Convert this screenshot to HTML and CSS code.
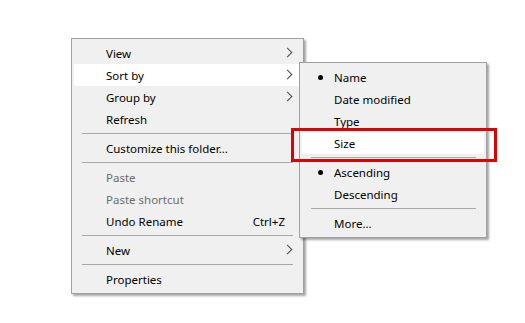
FILE: index.html
```html
<!DOCTYPE html>
<html lang="en">
<head>
    <meta charset="UTF-8">
    <meta name="viewport" content="width=device-width, initial-scale=1.0">
    <title>Context Menu</title>
    <link rel="stylesheet" href="styles.css">
</head>
<body>

    <div class="desktop">
        <ul class="menu main-menu">
            <li class="menu-item has-sub">View</li>
            <li class="menu-item has-sub hover">Sort by</li>
            <li class="menu-item has-sub">Group by</li>
            <li class="menu-item">Refresh</li>
            <li class="menu-sep"></li>
            <li class="menu-item">Customize this folder...</li>
            <li class="menu-sep"></li>
            <li class="menu-item disabled">Paste</li>
            <li class="menu-item disabled">Paste shortcut</li>
            <li class="menu-item">Undo Rename<span class="shortcut">Ctrl+Z</span></li>
            <li class="menu-sep"></li>
            <li class="menu-item has-sub">New</li>
            <li class="menu-sep"></li>
            <li class="menu-item">Properties</li>
        </ul>

        <ul class="menu sub-menu">
            <li class="menu-item checked">Name</li>
            <li class="menu-item">Date modified</li>
            <li class="menu-item">Type</li>
            <li class="menu-item hover">Size</li>
            <li class="menu-sep"></li>
            <li class="menu-item checked">Ascending</li>
            <li class="menu-item">Descending</li>
            <li class="menu-sep"></li>
            <li class="menu-item">More...</li>
        </ul>

        <div class="mark-box"></div>
    </div>

</body>
</html>
```

FILE: styles.css
```css
:root {
    --menu-bg: #F0F0F0;
    --menu-border: #A0A0A0;
    --sep-color: #A8A8A8;
    --text-dark: #000000;
    --text-disabled: #6D6D6D;
    --mark-red: #E00000;
    --font-family: "Noto Sans", "Segoe UI", sans-serif;
}
*, *::before, *::after { box-sizing: border-box; }
body { margin: 0; background: #FFFFFF; font-family: var(--font-family); font-size: 11.5px; color: var(--text-dark); }
.desktop { position: relative; width: 525px; height: 323px; padding: 38px 0 0 71px; }

.menu { list-style: none; margin: 0; background-color: var(--menu-bg); border: 1px solid var(--menu-border); box-shadow: 2px 2px 2px rgba(0, 0, 0, 0.35); }
.main-menu { width: 233px; padding: 3px 2px; }
.sub-menu { position: absolute; left: 299px; top: 62px; width: 188px; padding: 3px 2px; }

.menu-item { position: relative; height: 22px; line-height: 24px; padding-left: 32px; padding-right: 18px; white-space: nowrap; }
.menu-item.hover { background-color: #FFFFFF; }
.main-menu .menu-item.hover { margin-right: -3px; }
.menu-item.disabled { color: var(--text-disabled); }
.menu-item .shortcut { position: absolute; right: 16px; top: 0; }
.menu-item.has-sub::after {
    content: ""; position: absolute; right: 10px; top: 7px; width: 7px; height: 7px;
    border-right: 1px solid #4A4A4A; border-top: 1px solid #4A4A4A;
    transform: rotate(45deg); transform-origin: center;
}
.main-menu .menu-item.hover::after { right: 13px; }
.menu-item.checked::before { content: ""; position: absolute; left: 16px; top: 9px; width: 5px; height: 5px; border-radius: 50%; background: #000; }

.menu-sep { height: 7px; padding: 3px 8px 3px 8px; }
.menu-sep::before { content: ""; display: block; height: 1px; background-color: var(--sep-color); }
.sub-menu .menu-sep { padding: 3px 8px 3px 9px; }

.mark-box { position: absolute; left: 291px; top: 128px; width: 206px; height: 34px; border: 3px solid var(--mark-red); }
```
